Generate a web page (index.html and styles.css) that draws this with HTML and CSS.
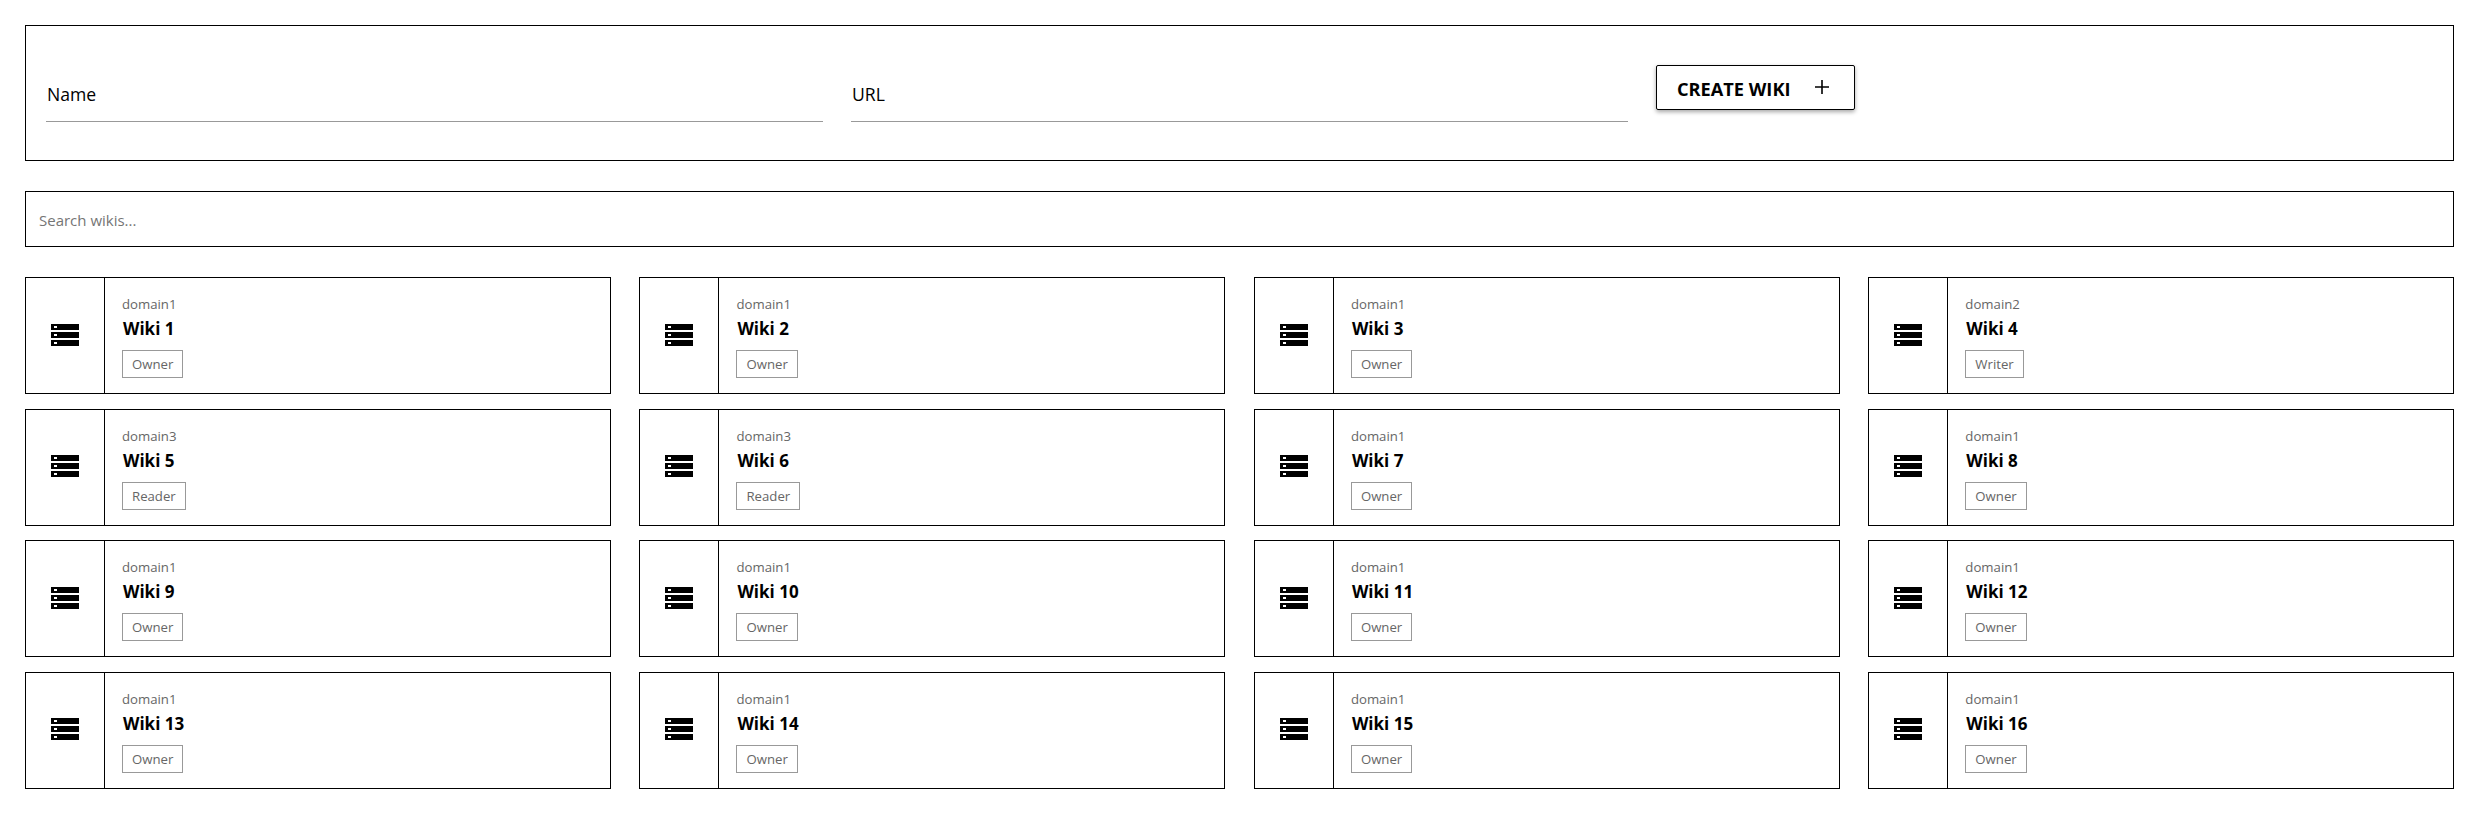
FILE: index.html
```html
<!DOCTYPE html>
<html lang="en">
<head>
<meta charset="utf-8">
<title>Wikis</title>
<link rel="stylesheet" href="styles.css">
</head>
<body>
<main class="page">
<form class="create-panel">
  <div class="field"><span class="field-label">Name</span></div>
  <div class="field"><span class="field-label">URL</span></div>
  <button type="button" class="create-btn"><span>CREATE WIKI</span>
    <svg class="plus" viewBox="0 0 16 16" width="16" height="16"><path d="M8 1v14M1 8h14" stroke="#000" stroke-width="1.6" fill="none"/></svg>
  </button>
</form>
<div class="search"><span class="search-text">Search wikis...</span></div>
<section class="grid">
<a class="card"><div class="card-icon"><svg class="db" viewBox="0 0 28 22" width="28" height="22"><path fill-rule="evenodd" d="M0 0h28v6H0zM0 8h28v6H0zM0 16h28v6H0zM3 2v2h3V2zM3 10v2h3v-2zM3 18v2h3v-2z"/></svg></div><div class="card-body"><div class="domain">domain1</div><div class="title">Wiki 1</div><span class="role">Owner</span></div></a>
<a class="card"><div class="card-icon"><svg class="db" viewBox="0 0 28 22" width="28" height="22"><path fill-rule="evenodd" d="M0 0h28v6H0zM0 8h28v6H0zM0 16h28v6H0zM3 2v2h3V2zM3 10v2h3v-2zM3 18v2h3v-2z"/></svg></div><div class="card-body"><div class="domain">domain1</div><div class="title">Wiki 2</div><span class="role">Owner</span></div></a>
<a class="card"><div class="card-icon"><svg class="db" viewBox="0 0 28 22" width="28" height="22"><path fill-rule="evenodd" d="M0 0h28v6H0zM0 8h28v6H0zM0 16h28v6H0zM3 2v2h3V2zM3 10v2h3v-2zM3 18v2h3v-2z"/></svg></div><div class="card-body"><div class="domain">domain1</div><div class="title">Wiki 3</div><span class="role">Owner</span></div></a>
<a class="card"><div class="card-icon"><svg class="db" viewBox="0 0 28 22" width="28" height="22"><path fill-rule="evenodd" d="M0 0h28v6H0zM0 8h28v6H0zM0 16h28v6H0zM3 2v2h3V2zM3 10v2h3v-2zM3 18v2h3v-2z"/></svg></div><div class="card-body"><div class="domain">domain2</div><div class="title">Wiki 4</div><span class="role">Writer</span></div></a>
<a class="card"><div class="card-icon"><svg class="db" viewBox="0 0 28 22" width="28" height="22"><path fill-rule="evenodd" d="M0 0h28v6H0zM0 8h28v6H0zM0 16h28v6H0zM3 2v2h3V2zM3 10v2h3v-2zM3 18v2h3v-2z"/></svg></div><div class="card-body"><div class="domain">domain3</div><div class="title">Wiki 5</div><span class="role">Reader</span></div></a>
<a class="card"><div class="card-icon"><svg class="db" viewBox="0 0 28 22" width="28" height="22"><path fill-rule="evenodd" d="M0 0h28v6H0zM0 8h28v6H0zM0 16h28v6H0zM3 2v2h3V2zM3 10v2h3v-2zM3 18v2h3v-2z"/></svg></div><div class="card-body"><div class="domain">domain3</div><div class="title">Wiki 6</div><span class="role">Reader</span></div></a>
<a class="card"><div class="card-icon"><svg class="db" viewBox="0 0 28 22" width="28" height="22"><path fill-rule="evenodd" d="M0 0h28v6H0zM0 8h28v6H0zM0 16h28v6H0zM3 2v2h3V2zM3 10v2h3v-2zM3 18v2h3v-2z"/></svg></div><div class="card-body"><div class="domain">domain1</div><div class="title">Wiki 7</div><span class="role">Owner</span></div></a>
<a class="card"><div class="card-icon"><svg class="db" viewBox="0 0 28 22" width="28" height="22"><path fill-rule="evenodd" d="M0 0h28v6H0zM0 8h28v6H0zM0 16h28v6H0zM3 2v2h3V2zM3 10v2h3v-2zM3 18v2h3v-2z"/></svg></div><div class="card-body"><div class="domain">domain1</div><div class="title">Wiki 8</div><span class="role">Owner</span></div></a>
<a class="card"><div class="card-icon"><svg class="db" viewBox="0 0 28 22" width="28" height="22"><path fill-rule="evenodd" d="M0 0h28v6H0zM0 8h28v6H0zM0 16h28v6H0zM3 2v2h3V2zM3 10v2h3v-2zM3 18v2h3v-2z"/></svg></div><div class="card-body"><div class="domain">domain1</div><div class="title">Wiki 9</div><span class="role">Owner</span></div></a>
<a class="card"><div class="card-icon"><svg class="db" viewBox="0 0 28 22" width="28" height="22"><path fill-rule="evenodd" d="M0 0h28v6H0zM0 8h28v6H0zM0 16h28v6H0zM3 2v2h3V2zM3 10v2h3v-2zM3 18v2h3v-2z"/></svg></div><div class="card-body"><div class="domain">domain1</div><div class="title">Wiki 10</div><span class="role">Owner</span></div></a>
<a class="card"><div class="card-icon"><svg class="db" viewBox="0 0 28 22" width="28" height="22"><path fill-rule="evenodd" d="M0 0h28v6H0zM0 8h28v6H0zM0 16h28v6H0zM3 2v2h3V2zM3 10v2h3v-2zM3 18v2h3v-2z"/></svg></div><div class="card-body"><div class="domain">domain1</div><div class="title">Wiki 11</div><span class="role">Owner</span></div></a>
<a class="card"><div class="card-icon"><svg class="db" viewBox="0 0 28 22" width="28" height="22"><path fill-rule="evenodd" d="M0 0h28v6H0zM0 8h28v6H0zM0 16h28v6H0zM3 2v2h3V2zM3 10v2h3v-2zM3 18v2h3v-2z"/></svg></div><div class="card-body"><div class="domain">domain1</div><div class="title">Wiki 12</div><span class="role">Owner</span></div></a>
<a class="card"><div class="card-icon"><svg class="db" viewBox="0 0 28 22" width="28" height="22"><path fill-rule="evenodd" d="M0 0h28v6H0zM0 8h28v6H0zM0 16h28v6H0zM3 2v2h3V2zM3 10v2h3v-2zM3 18v2h3v-2z"/></svg></div><div class="card-body"><div class="domain">domain1</div><div class="title">Wiki 13</div><span class="role">Owner</span></div></a>
<a class="card"><div class="card-icon"><svg class="db" viewBox="0 0 28 22" width="28" height="22"><path fill-rule="evenodd" d="M0 0h28v6H0zM0 8h28v6H0zM0 16h28v6H0zM3 2v2h3V2zM3 10v2h3v-2zM3 18v2h3v-2z"/></svg></div><div class="card-body"><div class="domain">domain1</div><div class="title">Wiki 14</div><span class="role">Owner</span></div></a>
<a class="card"><div class="card-icon"><svg class="db" viewBox="0 0 28 22" width="28" height="22"><path fill-rule="evenodd" d="M0 0h28v6H0zM0 8h28v6H0zM0 16h28v6H0zM3 2v2h3V2zM3 10v2h3v-2zM3 18v2h3v-2z"/></svg></div><div class="card-body"><div class="domain">domain1</div><div class="title">Wiki 15</div><span class="role">Owner</span></div></a>
<a class="card"><div class="card-icon"><svg class="db" viewBox="0 0 28 22" width="28" height="22"><path fill-rule="evenodd" d="M0 0h28v6H0zM0 8h28v6H0zM0 16h28v6H0zM3 2v2h3V2zM3 10v2h3v-2zM3 18v2h3v-2z"/></svg></div><div class="card-body"><div class="domain">domain1</div><div class="title">Wiki 16</div><span class="role">Owner</span></div></a>
</section>
</main>
</body>
</html>
```
FILE: styles.css
```css
* { box-sizing: border-box; }
html, body { margin: 0; background: #fff; }
body { font-family: "Open Sans", "Noto Sans", sans-serif; color: #000; }
.page { padding: 25px; display: flex; flex-direction: column; gap: 30px; }
.create-panel {
  height: 136px; border: 1px solid #000; padding: 0 20px;
  display: grid; grid-template-columns: 777px 777px auto; column-gap: 28px; justify-content: start;
}
.field { height: 96px; display: flex; align-items: flex-end; border-bottom: 1px solid #999; padding-bottom: 15px; padding-left: 1px; align-self: start; }
.field-label { font-size: 17.6px; line-height: 24px; color: #000; }
.create-btn {
  width: 199px; height: 45px; margin-top: 39px; background: #fff; border: 1px solid #000; border-radius: 2px;
  box-shadow: 0 2px 4px rgba(0,0,0,.35); display: flex; align-items: center; padding: 2px 0 0 20px; gap: 24px;
  font-family: inherit; font-size: 18.2px; font-weight: 700; color: #000;
}
.plus { flex: none; margin-top: -3px; }
.search { height: 56px; border: 1px solid #000; display: flex; align-items: center; padding: 1px 0 0 13px; }
.search-text { font-size: 15px; color: #757575; }
.grid { display: grid; grid-template-columns: repeat(4, 1fr); column-gap: 28.8px; row-gap: 14.67px; }
.card { height: 117px; border: 1px solid #000; display: flex; }
.card-icon { width: 79px; flex: none; border-right: 1px solid #000; display: flex; align-items: center; justify-content: center; padding-bottom: 2px; }
.db { display: block; }
.card-body { padding: 17px 0 0 17px; display: flex; flex-direction: column; align-items: flex-start; }
.domain { font-size: 13.2px; line-height: 18px; color: #666; }
.title { font-size: 17px; font-weight: 700; line-height: 24px; margin: 4px 0 0 1px; color: #000; }
.role { margin-top: 9px; height: 28px; border: 1px solid #999; padding: 0 9px; font-size: 13.2px; line-height: 26px; color: #666; }
```
